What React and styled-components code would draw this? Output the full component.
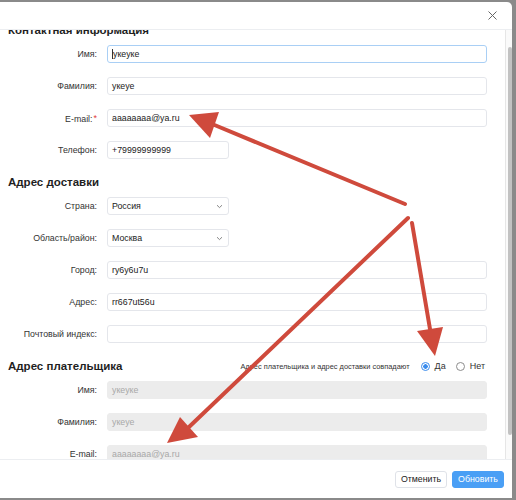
import { useLayoutEffect, useRef } from "react";
import styled, { createGlobalStyle } from "styled-components";

const GlobalStyle = createGlobalStyle`
  html, body {
    margin: 0;
    padding: 0;
    background: #8a8a8a;
  }
  body {
    font-family: "Liberation Sans", Arial, sans-serif;
    -webkit-font-smoothing: antialiased;
  }
`;

const contact = [
    { label: "Имя:", value: "укеуке", focused: true },
    { label: "Фамилия:", value: "укеуе" },
    { label: "E-mail:", value: "аааааааа@ya.ru", required: true },
    { label: "Телефон:", value: "+79999999999", short: true },
];

const delivery = [
    { label: "Страна:", value: "Россия", select: true },
    { label: "Область/район:", value: "Москва", select: true },
    { label: "Город:", value: "ry6y6u7u" },
    { label: "Адрес:", value: "rr667ut56u" },
    { label: "Почтовый индекс:", value: "" },
];

const payer = [
    { label: "Имя:", value: "укеуке" },
    { label: "Фамилия:", value: "укеуе" },
    { label: "E-mail:", value: "аааааааа@ya.ru" },
];

const Chevron = () => (
    <svg width="7" height="5" viewBox="0 0 7 5">
        <path d="M1 1.2 L3.5 3.6 L6 1.2" fill="none" stroke="#777" strokeWidth="0.9" />
    </svg>
);

const FormRow = ({ label, value, required, short, select, focused, disabled }) => (
    <Row>
        <Label>
            {label}
            {required && <Star>*</Star>}
        </Label>
        <Field $short={short || select} $focused={focused} $disabled={disabled}>
            {focused && <Caret />}
            <span>{value}</span>
            {select && <Chevron />}
        </Field>
    </Row>
);

const Arrow = ({ from, tip, left, right }) => (
    <g>
        <line x1={from[0]} y1={from[1]} x2={(left[0] + right[0]) / 2} y2={(left[1] + right[1]) / 2}
            stroke="#cf4a3c" strokeWidth="4" strokeLinecap="round" />
        <polygon points={`${tip[0]},${tip[1]} ${left[0]},${left[1]} ${right[0]},${right[1]}`} fill="#cf4a3c" />
    </g>
);

const App = () => {
    const viewRef = useRef(null);

    useLayoutEffect(() => {
        if (viewRef.current) viewRef.current.scrollTop = 19;
    }, []);

    return (
        <Page>
            <GlobalStyle />
            <Modal>
                <Header>
                    <svg width="9" height="9" viewBox="0 0 9 9">
                        <path d="M0.5 0.5 L8.5 8.5 M8.5 0.5 L0.5 8.5" stroke="#666" strokeWidth="1" />
                    </svg>
                </Header>
                <Body>
                    <Viewport ref={viewRef}>
                        <Form>
                            <Section>
                                <SectionHead>
                                    <Title>Контактная информация</Title>
                                </SectionHead>
                                {contact.map((r) => <FormRow key={r.label} {...r} />)}
                            </Section>
                            <Section>
                                <SectionHead>
                                    <Title>Адрес доставки</Title>
                                </SectionHead>
                                {delivery.map((r) => <FormRow key={r.label} {...r} />)}
                            </Section>
                            <Section>
                                <SectionHead>
                                    <Title>Адрес плательщика</Title>
                                    <Same>
                                        <Hint>Адрес плательщика и адрес доставки совпадают</Hint>
                                        <Option><Radio $checked />Да</Option>
                                        <Option><Radio />Нет</Option>
                                    </Same>
                                </SectionHead>
                                {payer.map((r) => <FormRow key={r.label} {...r} disabled />)}
                            </Section>
                        </Form>
                    </Viewport>
                    <Track>
                        <Thumb />
                    </Track>
                </Body>
                <Footer>
                    <Button>Отменить</Button>
                    <Button $primary>Обновить</Button>
                </Footer>
            </Modal>
            <Overlay width="516" height="500" viewBox="0 0 516 500">
                <Arrow from={[405, 204]} tip={[189, 115]} left={[219, 112]} right={[210, 138]} />
                <Arrow from={[408, 218]} tip={[167, 443]} left={[180, 417]} right={[198, 437]} />
                <Arrow from={[412, 223]} tip={[435, 356]} left={[417, 331]} right={[443, 327]} />
            </Overlay>
        </Page>
    );
};

const Page = styled.div`
    position: relative;
    width: 516px;
    height: 500px;
    overflow: hidden;
    background: #8a8a8a;
`;

const Modal = styled.div`
    margin-top: 2px;
    width: 512px;
    height: 496px;
    background: #fff;
    border-radius: 0 5px 0 0;
    display: flex;
    flex-direction: column;
    overflow: hidden;
`;

const Header = styled.div`
    height: 27px;
    flex-shrink: 0;
    border-bottom: 1px solid #eceef1;
    display: flex;
    justify-content: flex-end;
    align-items: center;
    padding-right: 15px;
`;

const Body = styled.div`
    flex: 1;
    min-height: 0;
    display: flex;
`;

const Viewport = styled.div`
    flex: 1;
    overflow: hidden;
`;

const Track = styled.div`
    width: 7px;
    flex-shrink: 0;
    background: #fafafa;
    border-left: 1px solid #e6e6e6;
    padding: 17px 0 0 2px;
    box-sizing: border-box;
`;

const Thumb = styled.div`
    width: 4px;
    height: 388px;
    border-radius: 2px;
    background: #c2c2c2;
`;

const Form = styled.div`
    display: flex;
    flex-direction: column;
    gap: 15px;
    padding: 11px 18px 22px 8px;
`;

const Section = styled.div`
    display: flex;
    flex-direction: column;
    gap: 14px;
`;

const SectionHead = styled.div`
    display: flex;
    justify-content: space-between;
    align-items: center;
    height: 16px;
    margin-bottom: -7px;
`;

const Title = styled.div`
    font-size: 11.5px;
    font-weight: 700;
    color: #1f1f1f;
`;

const Same = styled.div`
    display: flex;
    align-items: center;
    gap: 10px;
    padding-right: 2px;
`;

const Hint = styled.span`
    font-size: 7.4px;
    color: #333;
    margin-right: 1px;
`;

const Option = styled.label`
    display: flex;
    align-items: center;
    gap: 5px;
    font-size: 9px;
    color: #333;
`;

const Radio = styled.span`
    box-sizing: border-box;
    width: 9px;
    height: 9px;
    border-radius: 50%;
    border: 1px solid ${(p) => (p.$checked ? "#3b8ced" : "#8d8d8d")};
    background: ${(p) => (p.$checked ? "radial-gradient(circle, #3b8ced 0 2px, #fff 2.5px)" : "#fff")};
`;

const Row = styled.div`
    display: grid;
    grid-template-columns: 89px 1fr;
    column-gap: 10px;
    align-items: center;
`;

const Label = styled.div`
    text-align: right;
    font-size: 8.8px;
    color: #333;
`;

const Star = styled.span`
    color: #e23b3b;
    font-size: 9px;
    vertical-align: 1px;
    margin-left: 1px;
`;

const Field = styled.div`
    box-sizing: border-box;
    height: 18px;
    width: ${(p) => (p.$short ? "122px" : "auto")};
    display: flex;
    align-items: center;
    justify-content: space-between;
    padding: 0 5px 0 4px;
    border: 1px solid ${(p) => (p.$focused ? "#a9cff5" : p.$disabled ? "#ececec" : "#e4e6eb")};
    border-radius: 3px;
    background: ${(p) => (p.$disabled ? "#ececec" : "#fff")};
    color: ${(p) => (p.$disabled ? "#a8a8a8" : "#222")};
    font-size: 8.8px;

    span {
        flex: 1;
    }
`;

const Caret = styled.i`
    width: 1px;
    height: 10px;
    background: #333;
    flex-shrink: 0;
`;

const Footer = styled.div`
    height: 38px;
    flex-shrink: 0;
    border-top: 1px solid #eceef1;
    display: flex;
    justify-content: flex-end;
    align-items: center;
    gap: 5px;
    padding-right: 8px;
`;

const Button = styled.button`
    width: 52px;
    height: 17px;
    padding: 0;
    border-radius: 3px;
    border: 1px solid ${(p) => (p.$primary ? "#4a9ff5" : "#dfe2e8")};
    background: ${(p) => (p.$primary ? "#4a9ff5" : "#fff")};
    color: ${(p) => (p.$primary ? "#fff" : "#222")};
    font-family: inherit;
    font-size: 8.8px;
`;

const Overlay = styled.svg`
    position: absolute;
    left: 0;
    top: 0;
    pointer-events: none;
`;

export default App;
